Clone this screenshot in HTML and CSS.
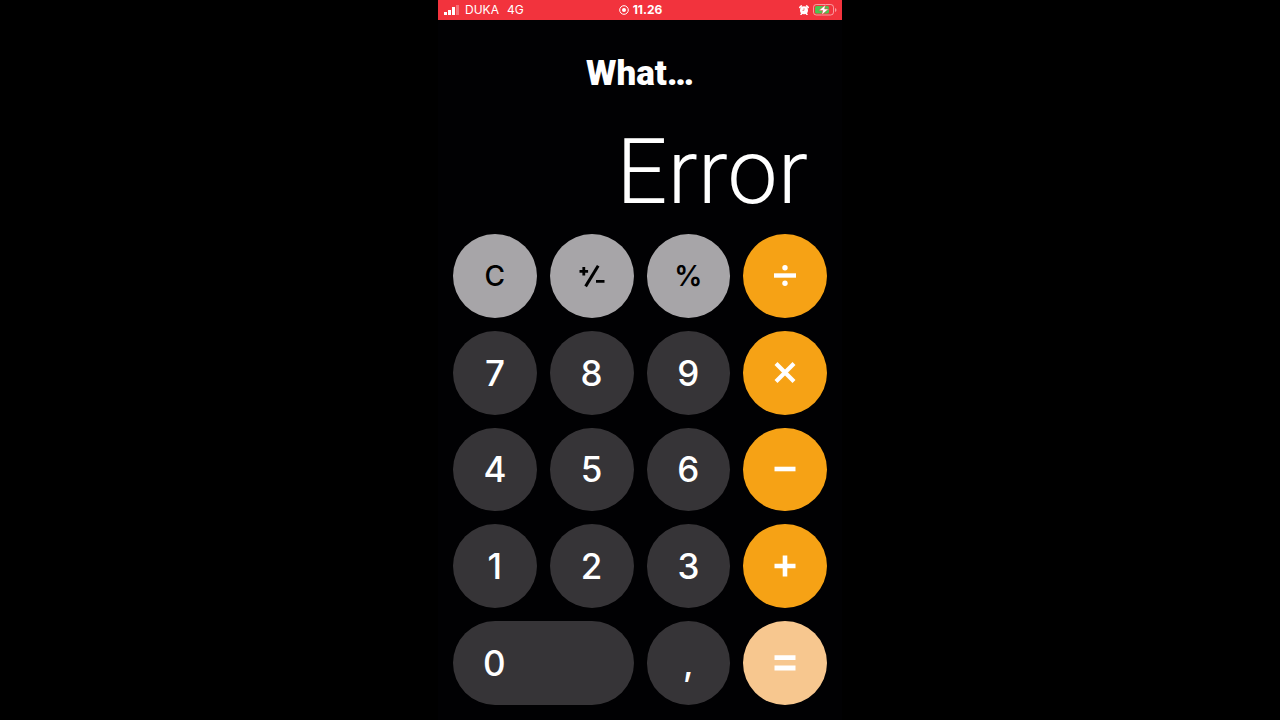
FILE: index.html
```html
<!doctype html>
<html lang="en">
  <head>
    <meta charset="utf-8">
    <title>Calculator</title>
    <link rel="stylesheet" href="styles.css">
  </head>
  <body>
    <main class="phone">
      <header class="status">
        <div class="carrier">
          <svg class="signal" viewBox="0 0 16 10">
            <path d="M0 7h3v3H0zM4 5h3v5H4zM8 2h3v8H8z" fill="#fff"/>
            <path d="M12 0h3v10h-3z" fill="#fff" opacity=".3"/>
          </svg>
          <span>DUKA</span>
          <span>4G</span>
        </div>
        <div class="time">
          <svg class="record" viewBox="0 0 10 10">
            <circle cx="5" cy="5" r="4.3" fill="none" stroke="#fff"/>
            <circle cx="5" cy="5" r="2" fill="#fff"/>
          </svg>
          <span>11.26</span>
        </div>
        <div class="power">
          <svg class="alarm" viewBox="0 0 10 10">
            <path d="M.8 2.4 2.4.9M9.2 2.4 7.6.9M2 9.4l1-1.2M8 9.4 7 8.2" stroke="#fff" stroke-width="1.5" stroke-linecap="round"/>
            <circle cx="5" cy="5.2" r="4" fill="#fff"/>
            <path d="M5 3.2v2.2h-1.6" fill="none" stroke="#f2333d" stroke-width=".6"/>
          </svg>
          <svg class="battery" viewBox="0 0 24 12">
            <rect x=".5" y=".5" width="20" height="10.5" rx="2.8" fill="none" stroke="#fff" opacity=".5"/>
            <path d="M22 4v4q1.5-.6 1.5-2T22 4z" fill="#fff" opacity=".5"/>
            <rect x="2" y="2" width="14" height="7.5" rx="1.5" fill="#4cc552"/>
            <path d="M12.5.8 5.8 6.6h4L8.6 11l7-6h-4z" fill="#fff" stroke="#f2333d" stroke-width=".5"/>
          </svg>
        </div>
      </header>

      <h1>What…</h1>
      <output class="display">Error</output>

      <section class="keys">
        <button class="key light">C</button>
        <button class="key light" aria-label="plus minus">
          <svg class="icon" viewBox="0 0 28 28"><path d="M1.5 9.3h8.6M5.8 5v8.6M18 19.3h8.5" stroke-width="2.8"/><path d="M7.6 24.4 20.2 3.8" stroke-width="3"/></svg>
        </button>
        <button class="key light percent">%</button>
        <button class="key orange" aria-label="divide">
          <svg class="icon" viewBox="0 0 28 28"><path d="M3 13.5h22" stroke-width="4.4"/><circle cx="14" cy="5.7" r="2.7"/><circle cx="14" cy="21.3" r="2.7"/></svg>
        </button>

        <button class="key">7</button>
        <button class="key">8</button>
        <button class="key">9</button>
        <button class="key orange" aria-label="multiply">
          <svg class="icon" viewBox="0 0 28 28"><path d="m5 4.5 18 18M23 4.5l-18 18" stroke-width="4.2"/></svg>
        </button>

        <button class="key">4</button>
        <button class="key">5</button>
        <button class="key">6</button>
        <button class="key orange" aria-label="subtract">
          <svg class="icon" viewBox="0 0 28 28"><path d="M3.5 14h21" stroke-width="4.6"/></svg>
        </button>

        <button class="key">1</button>
        <button class="key">2</button>
        <button class="key">3</button>
        <button class="key orange" aria-label="add">
          <svg class="icon" viewBox="0 0 28 28"><path d="M3.5 14h21M14 3.5v21" stroke-width="4.6"/></svg>
        </button>

        <button class="key zero">0</button>
        <button class="key">,</button>
        <button class="key orange pressed" aria-label="equals">
          <svg class="icon" viewBox="0 0 28 28"><path d="M3.5 8.6h21M3.5 19h21" stroke-width="4.8"/></svg>
        </button>
      </section>
    </main>
  </body>
</html>
```
FILE: styles.css
```css
* { box-sizing: border-box; }
body {
  margin: 0;
  min-height: 100vh;
  background: #000;
  color: #fff;
  font-family: Inter, "Liberation Sans", sans-serif;
}
.phone {
  width: 100%;
  max-width: 404px;
  margin: 0 auto;
  background: #010103;
}

/* status bar */
.status {
  display: grid;
  grid-template-columns: 1fr auto 1fr;
  align-items: center;
  height: 20px;
  padding: 0 5px 0 6px;
  background: #f2333d;
  font-size: 12px;
  line-height: 20px;
}
.carrier, .time, .power {
  display: flex;
  align-items: center;
}
.carrier { gap: 8px; }
.signal {
  width: 16px;
  height: 10px;
  margin-right: -3px;
}
.time {
  gap: 4px;
  font-weight: 700;
}
.record, .alarm {
  width: 10px;
  height: 10px;
}
.power {
  justify-content: flex-end;
  gap: 4px;
}
.battery {
  width: 24px;
  height: 12px;
}

h1 {
  margin: 34px 0 0;
  font-family: Roboto, sans-serif;
  font-size: 35px;
  font-weight: 900;
  line-height: 40px;
  text-align: center;
}
.display {
  display: block;
  margin-top: 30px;
  padding: 0 34px;
  font-family: Roboto, sans-serif;
  font-size: 90px;
  font-weight: 300;
  line-height: 98px;
  text-align: right;
}

.keys {
  display: grid;
  grid-template-columns: repeat(4, 1fr);
  gap: 13px;
  padding: 12px 15px 15px;
}
.key {
  display: flex;
  align-items: center;
  justify-content: center;
  aspect-ratio: 1;
  padding: 0;
  border: none;
  border-radius: 50px;
  background: #363437;
  color: #fff;
  font-family: inherit;
  font-size: 35px;
  font-weight: 500;
  cursor: pointer;
}
.light {
  background: #a7a5a8;
  color: #000;
  font-size: 28px;
}
.percent { font-weight: 600; }
.orange { background: #f6a215; }
.pressed { background: #f7c78f; }
.zero {
  grid-column: span 2;
  aspect-ratio: auto;
  justify-content: flex-start;
  padding-left: 30px;
}
.icon {
  width: 28px;
  height: 28px;
  fill: currentColor;
  stroke: currentColor;
}
.icon circle { stroke: none; }
```
